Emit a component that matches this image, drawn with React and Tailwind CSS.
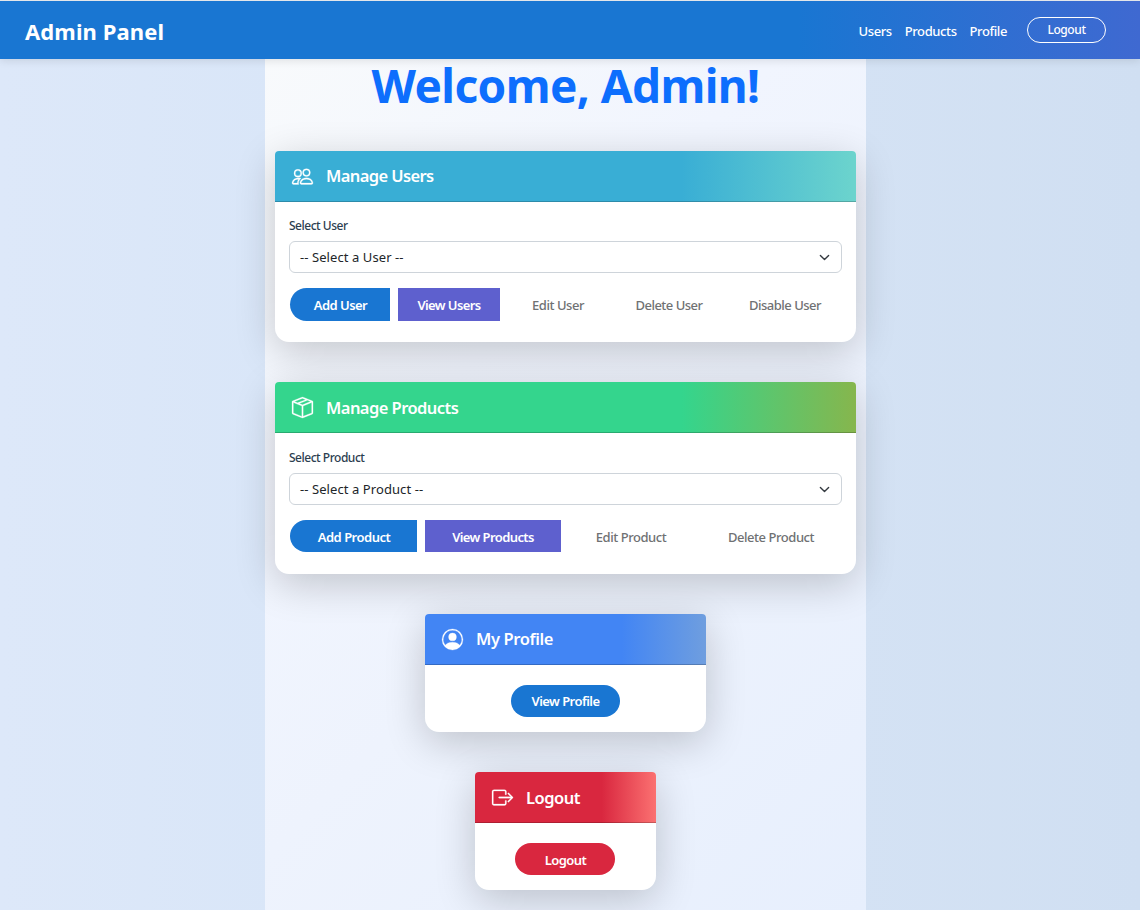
import React from "react";
import { BsPeople, BsBoxSeam, BsPersonCircle, BsBoxArrowRight } from "react-icons/bs";

function Card({ icon: Icon, title, titleClass, headerClass, className, children }) {
  return (
    <section className={`rounded-t-[4px] rounded-b-[14px] bg-white shadow-[0_10px_40px_rgba(0,0,0,0.2)] ${className}`}>
      <header className={`flex h-[51px] items-center gap-[13px] rounded-t-[4px] border-b border-black/20 bg-origin-border pl-[17px] text-white ${headerClass}`}>
        <Icon className="size-[21px] shrink-0 overflow-visible stroke-white stroke-[0.2]" />
        <h2 className={`text-[16.5px] leading-6 font-semibold whitespace-nowrap ${titleClass}`}>{title}</h2>
      </header>
      {children}
    </section>
  );
}

function Field({ label, value }) {
  return (
    <div>
      <div className="h-[18px] text-[12px] leading-[18px] font-medium tracking-[-0.48px] text-[#2c3e50]">{label}</div>
      <div className="mt-[6px] flex h-8 items-center justify-between rounded-[6px] border border-[#ced4da] pr-[11px] pl-[10px]">
        <span className="pt-px text-[13px] tracking-[0.08px] text-[#212529]">{value}</span>
        <svg viewBox="0 0 16 16" className="size-[11px]" fill="none" stroke="#343a40" strokeWidth="2" strokeLinecap="round" strokeLinejoin="round">
          <path d="m2 5 6 6 6-6" />
        </svg>
      </div>
    </div>
  );
}

function Button({ className, children }) {
  return (
    <button className={`flex items-center justify-center text-[13px] whitespace-nowrap ${className}`}>
      {children}
    </button>
  );
}

export default function App() {
  return (
    <div className="flex h-[910px] flex-col overflow-hidden bg-[linear-gradient(90deg,#dde8f9_0%,#d9e6f8_25%,#d4e2f4_75%,#d0dff2_100%)] font-['Noto_Sans','Open_Sans',sans-serif]">
      <nav className="z-10 flex h-[59px] shrink-0 items-center justify-between border-t border-[#e3e6ea] bg-[linear-gradient(90deg,#1976d2_0%,#1976d2_70%,#3f69d1_100%)] pr-[34px] pl-[25px] text-white shadow-[0_2px_8px_rgba(0,0,0,0.1)]">
        <span className="mt-[3px] text-[22px] font-bold tracking-[0.1px]">Admin Panel</span>
        <div className="flex items-center text-[13px] font-medium">
          <span className="mt-[3px] mr-[13px] tracking-[-0.4px]">Users</span>
          <span className="mt-[3px] mr-[13px] tracking-[-0.4px]">Products</span>
          <span className="mt-[3px] mr-[20px] tracking-[-0.4px]">Profile</span>
          <button className="h-[26px] w-[79px] rounded-full border border-white text-[12px] font-medium tracking-[-0.4px]">Logout</button>
        </div>
      </nav>
      <main className="ml-[265px] flex w-[601px] flex-1 flex-col items-center bg-[linear-gradient(135deg,#f8fafc_0%,#f1f5fe_35%,#eef3fd_55%,#e7effd_100%)]">
        <h1 className="mt-px mb-px h-[50px] text-[46px] leading-[50px] font-bold tracking-[-0.6px] whitespace-nowrap text-[#0d6efd]">Welcome, Admin!</h1>

        <Card icon={BsPeople} title="Manage Users" titleClass="tracking-[-0.6px]" className="mt-10 h-[191px] w-[581px]" headerClass="bg-[linear-gradient(90deg,#39aed5_0%,#39aed5_70%,#6cd4cd_100%)]">
          <div className="px-[14px] pt-[15px]">
            <Field label="Select User" value="-- Select a User --" />
            <div className="mt-[15px] flex h-[33px] gap-2 pl-px">
              <Button className="w-[100px] rounded-l-full bg-[#1976d2] pt-[2px] pl-px font-semibold tracking-[-0.55px] text-white">Add User</Button>
              <Button className="w-[102px] bg-[#5e60ce] pt-[2px] font-semibold tracking-[-0.6px] text-white">View Users</Button>
              <Button className="w-[100px] pt-[2px] font-medium tracking-[-0.45px] text-[#6f7173]">Edit User</Button>
              <Button className="w-[106px] pt-[2px] font-medium tracking-[-0.5px] text-[#6f7173]">Delete User</Button>
              <Button className="w-[110px] pt-[2px] font-medium tracking-[-0.5px] text-[#6f7173]">Disable User</Button>
            </div>
          </div>
        </Card>

        <Card icon={BsBoxSeam} title="Manage Products" titleClass="pt-[2px] tracking-[-0.55px]" className="mt-10 h-[192px] w-[581px]" headerClass="bg-[linear-gradient(90deg,#34d58d_0%,#34d58d_70%,#86b64d_100%)]">
          <div className="px-[14px] pt-4">
            <Field label="Select Product" value="-- Select a Product --" />
            <div className="mt-[15px] flex h-8 gap-2 pl-px">
              <Button className="w-[127px] rounded-l-full bg-[#1976d2] pt-[3px] pl-px font-semibold tracking-[-0.5px] text-white">Add Product</Button>
              <Button className="w-[136px] bg-[#5e60ce] pt-[3px] font-semibold tracking-[-0.6px] text-white">View Products</Button>
              <Button className="w-[124px] pt-[3px] font-medium tracking-[-0.45px] text-[#6f7173]">Edit Product</Button>
              <Button className="w-[140px] pt-[3px] font-medium tracking-[-0.45px] text-[#6f7173]">Delete Product</Button>
            </div>
          </div>
        </Card>

        <Card icon={BsPersonCircle} title="My Profile" titleClass="tracking-[-0.4px]" className="mt-10 h-[118px] w-[281px]" headerClass="bg-[linear-gradient(90deg,#4285f4_0%,#4285f4_70%,#6f9edf_100%)]">
          <div className="flex justify-center pt-5">
            <Button className="h-8 w-[109px] rounded-full bg-[#1976d2] pt-[2px] font-semibold tracking-[-0.55px] text-white">View Profile</Button>
          </div>
        </Card>

        <Card icon={BsBoxArrowRight} title="Logout" titleClass="pt-[2px] tracking-[-0.5px]" className="mt-10 h-[118px] w-[181px]" headerClass="bg-[linear-gradient(90deg,#d9273f_0%,#d9273f_70%,#fb7171_100%)]">
          <div className="flex pt-5 pl-10">
            <Button className="h-8 w-[100px] rounded-full bg-[#d9273f] pt-[3px] pl-px font-semibold tracking-[-0.6px] text-white">Logout</Button>
          </div>
        </Card>
      </main>
    </div>
  );
}
